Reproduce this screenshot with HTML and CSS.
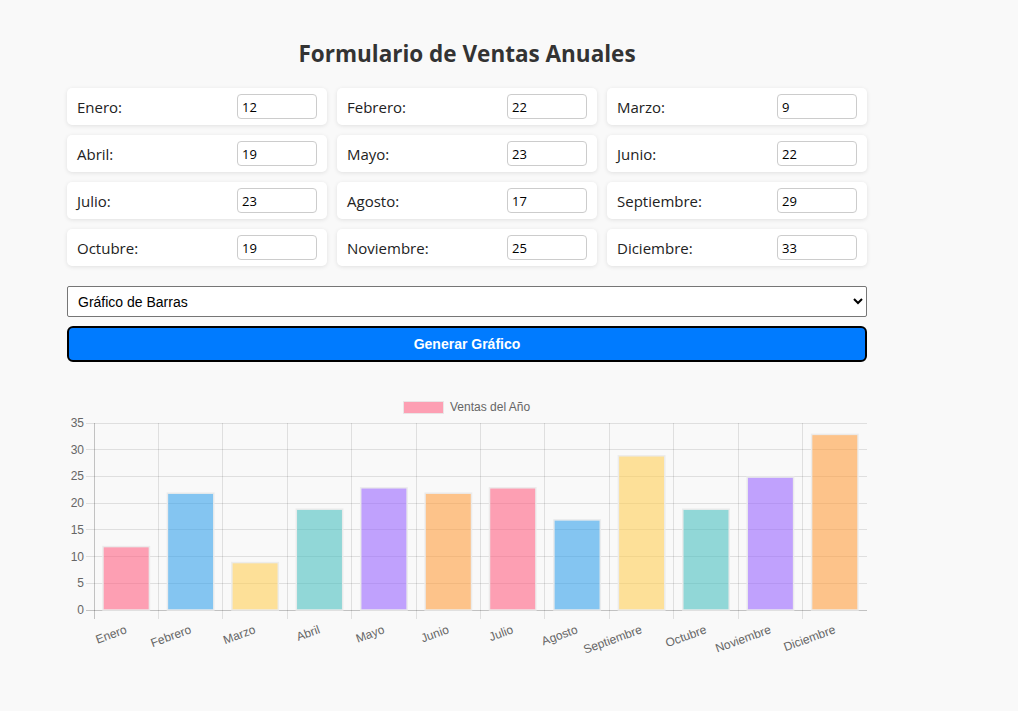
FILE: index.html
```html
<!DOCTYPE html>
<html lang="es">
<head>
<meta charset="utf-8">
<title>Formulario de Ventas Anuales</title>
<link rel="stylesheet" href="styles.css">
</head>
<body>
<div class="container">
  <h1 class="title">Formulario de Ventas Anuales</h1>
  <form class="month-grid">
    <div class="card"><label>Enero:</label><input type="number" value="12"></div>
    <div class="card"><label>Febrero:</label><input type="number" value="22"></div>
    <div class="card"><label>Marzo:</label><input type="number" value="9"></div>
    <div class="card"><label>Abril:</label><input type="number" value="19"></div>
    <div class="card"><label>Mayo:</label><input type="number" value="23"></div>
    <div class="card"><label>Junio:</label><input type="number" value="22"></div>
    <div class="card"><label>Julio:</label><input type="number" value="23"></div>
    <div class="card"><label>Agosto:</label><input type="number" value="17"></div>
    <div class="card"><label>Septiembre:</label><input type="number" value="29"></div>
    <div class="card"><label>Octubre:</label><input type="number" value="19"></div>
    <div class="card"><label>Noviembre:</label><input type="number" value="25"></div>
    <div class="card"><label>Diciembre:</label><input type="number" value="33"></div>
  </form>
  <select class="chart-type">
    <option>Gráfico de Barras</option>
    <option>Gráfico de Líneas</option>
    <option>Gráfico Circular</option>
  </select>
  <button class="generate" type="button">Generar Gráfico</button>
  <div class="chart">
    <svg width="800" height="270" viewBox="0 0 800 270" font-family="'Liberation Sans', Arial, sans-serif" font-size="12">
      <!-- legend -->
      <rect x="336.5" y="9.5" width="40" height="12" fill="rgba(255,99,132,0.6)" stroke="rgba(232,232,232,0.9)" stroke-width="1"/>
      <text x="383" y="15" fill="#666" dominant-baseline="central">Ventas del Año</text>
      <!-- horizontal grid -->
      <g stroke="rgba(0,0,0,0.1)" stroke-width="1" shape-rendering="crispEdges">
        <line x1="19" y1="31.5" x2="800" y2="31.5"/>
        <line x1="19" y1="57.5" x2="800" y2="57.5"/>
        <line x1="19" y1="84.5" x2="800" y2="84.5"/>
        <line x1="19" y1="111.5" x2="800" y2="111.5"/>
        <line x1="19" y1="137.5" x2="800" y2="137.5"/>
        <line x1="19" y1="164.5" x2="800" y2="164.5"/>
        <line x1="19" y1="191.5" x2="800" y2="191.5"/>
      </g>
      <!-- vertical grid -->
      <g stroke="rgba(0,0,0,0.1)" stroke-width="1" shape-rendering="crispEdges">
        <line x1="91.5" y1="31" x2="91.5" y2="227"/>
        <line x1="155.5" y1="31" x2="155.5" y2="227"/>
        <line x1="220.5" y1="31" x2="220.5" y2="227"/>
        <line x1="284.5" y1="31" x2="284.5" y2="227"/>
        <line x1="349.5" y1="31" x2="349.5" y2="227"/>
        <line x1="413.5" y1="31" x2="413.5" y2="227"/>
        <line x1="477.5" y1="31" x2="477.5" y2="227"/>
        <line x1="542.5" y1="31" x2="542.5" y2="227"/>
        <line x1="606.5" y1="31" x2="606.5" y2="227"/>
        <line x1="671.5" y1="31" x2="671.5" y2="227"/>
        <line x1="735.5" y1="31" x2="735.5" y2="227"/>
      </g>
      <!-- axes -->
      <g stroke="rgba(0,0,0,0.22)" stroke-width="1" shape-rendering="crispEdges">
        <line x1="27.5" y1="31" x2="27.5" y2="227"/>
        <line x1="19" y1="218.5" x2="800" y2="218.5"/>
      </g>
      <!-- y labels -->
      <g fill="#666" text-anchor="end" dominant-baseline="central">
        <text x="17" y="31">35</text>
        <text x="17" y="58">30</text>
        <text x="17" y="84">25</text>
        <text x="17" y="111">20</text>
        <text x="17" y="138">15</text>
        <text x="17" y="165">10</text>
        <text x="17" y="191">5</text>
        <text x="17" y="218">0</text>
      </g>
      <!-- bars -->
      <g stroke="rgba(235,235,235,0.95)" stroke-width="1.5">
        <rect x="36" y="154.6" width="46.4" height="63.4" fill="rgba(255,99,132,0.6)"/>
        <rect x="100.4" y="101.2" width="46.4" height="116.8" fill="rgba(54,162,235,0.6)"/>
        <rect x="164.9" y="170.6" width="46.4" height="47.4" fill="rgba(255,206,86,0.6)"/>
        <rect x="229.3" y="117.2" width="46.4" height="100.8" fill="rgba(75,192,192,0.6)"/>
        <rect x="293.7" y="95.8" width="46.4" height="122.2" fill="rgba(153,102,255,0.6)"/>
        <rect x="358.1" y="101.2" width="46.4" height="116.8" fill="rgba(255,159,64,0.6)"/>
        <rect x="422.5" y="95.8" width="46.4" height="122.2" fill="rgba(255,99,132,0.6)"/>
        <rect x="486.9" y="127.9" width="46.4" height="90.1" fill="rgba(54,162,235,0.6)"/>
        <rect x="551.4" y="63.8" width="46.4" height="154.2" fill="rgba(255,206,86,0.6)"/>
        <rect x="615.8" y="117.2" width="46.4" height="100.8" fill="rgba(75,192,192,0.6)"/>
        <rect x="680.2" y="85.1" width="46.4" height="132.9" fill="rgba(153,102,255,0.6)"/>
        <rect x="744.6" y="42.4" width="46.4" height="175.6" fill="rgba(255,159,64,0.6)"/>
      </g>
      <!-- x labels -->
      <g fill="#666" text-anchor="end" dominant-baseline="central">
        <text x="59.2" y="237" transform="rotate(-20 59.2 237)">Enero</text>
        <text x="123.6" y="237" transform="rotate(-20 123.6 237)">Febrero</text>
        <text x="188" y="237" transform="rotate(-20 188 237)">Marzo</text>
        <text x="252.5" y="237" transform="rotate(-20 252.5 237)">Abril</text>
        <text x="316.9" y="237" transform="rotate(-20 316.9 237)">Mayo</text>
        <text x="381.3" y="237" transform="rotate(-20 381.3 237)">Junio</text>
        <text x="445.7" y="237" transform="rotate(-20 445.7 237)">Julio</text>
        <text x="510.1" y="237" transform="rotate(-20 510.1 237)">Agosto</text>
        <text x="574.5" y="237" transform="rotate(-20 574.5 237)">Septiembre</text>
        <text x="639" y="237" transform="rotate(-20 639 237)">Octubre</text>
        <text x="703.4" y="237" transform="rotate(-20 703.4 237)">Noviembre</text>
        <text x="767.8" y="237" transform="rotate(-20 767.8 237)">Diciembre</text>
      </g>
    </svg>
  </div>
</div>
</body>
</html>
```
FILE: styles.css
```css
* { box-sizing: border-box; }

body {
  margin: 0;
  background: #f9f9f9;
  font-family: "Open Sans", "Noto Sans", "DejaVu Sans", sans-serif;
  color: #333;
}

.container {
  width: 800px;
  margin-left: 67px;
  padding-top: 38px;
}

.title {
  margin: 0 0 18px;
  font-size: 22.5px;
  line-height: 32px;
  font-weight: 700;
  text-align: center;
  color: #333;
}

.month-grid {
  display: grid;
  grid-template-columns: repeat(3, 1fr);
  gap: 10px;
  margin: 0 0 20px;
}

.card {
  display: flex;
  align-items: center;
  justify-content: space-between;
  height: 37px;
  padding: 0 10px;
  background: #fff;
  border-radius: 5px;
  box-shadow: 0 1px 4px rgba(0, 0, 0, 0.1);
}

.card label {
  font-size: 15px;
  color: #222;
}

.card input {
  width: 80px;
  height: 25px;
  padding: 0 4px;
  border: 1px solid #ccc;
  border-radius: 4px;
  font-family: inherit;
  font-size: 13px;
  color: #000;
  background: #fff;
}

.card input::-webkit-inner-spin-button,
.card input::-webkit-outer-spin-button {
  -webkit-appearance: none;
  margin: 0;
}

.chart-type {
  display: block;
  width: 800px;
  height: 31px;
  margin: 0 0 9px;
  padding: 0 6px;
  border: 1px solid #767676;
  border-radius: 2px;
  background: #fff;
  font-family: "Liberation Sans", Arial, sans-serif;
  font-size: 14px;
  color: #000;
}

.generate {
  display: block;
  width: 800px;
  height: 36px;
  margin: 0;
  border: 2px solid #000;
  border-radius: 6px;
  background: #007bff;
  color: #fff;
  font-family: "Liberation Sans", Arial, sans-serif;
  font-size: 14px;
  font-weight: 700;
}

.chart {
  margin-top: 30px;
}

.chart svg {
  display: block;
}
```
